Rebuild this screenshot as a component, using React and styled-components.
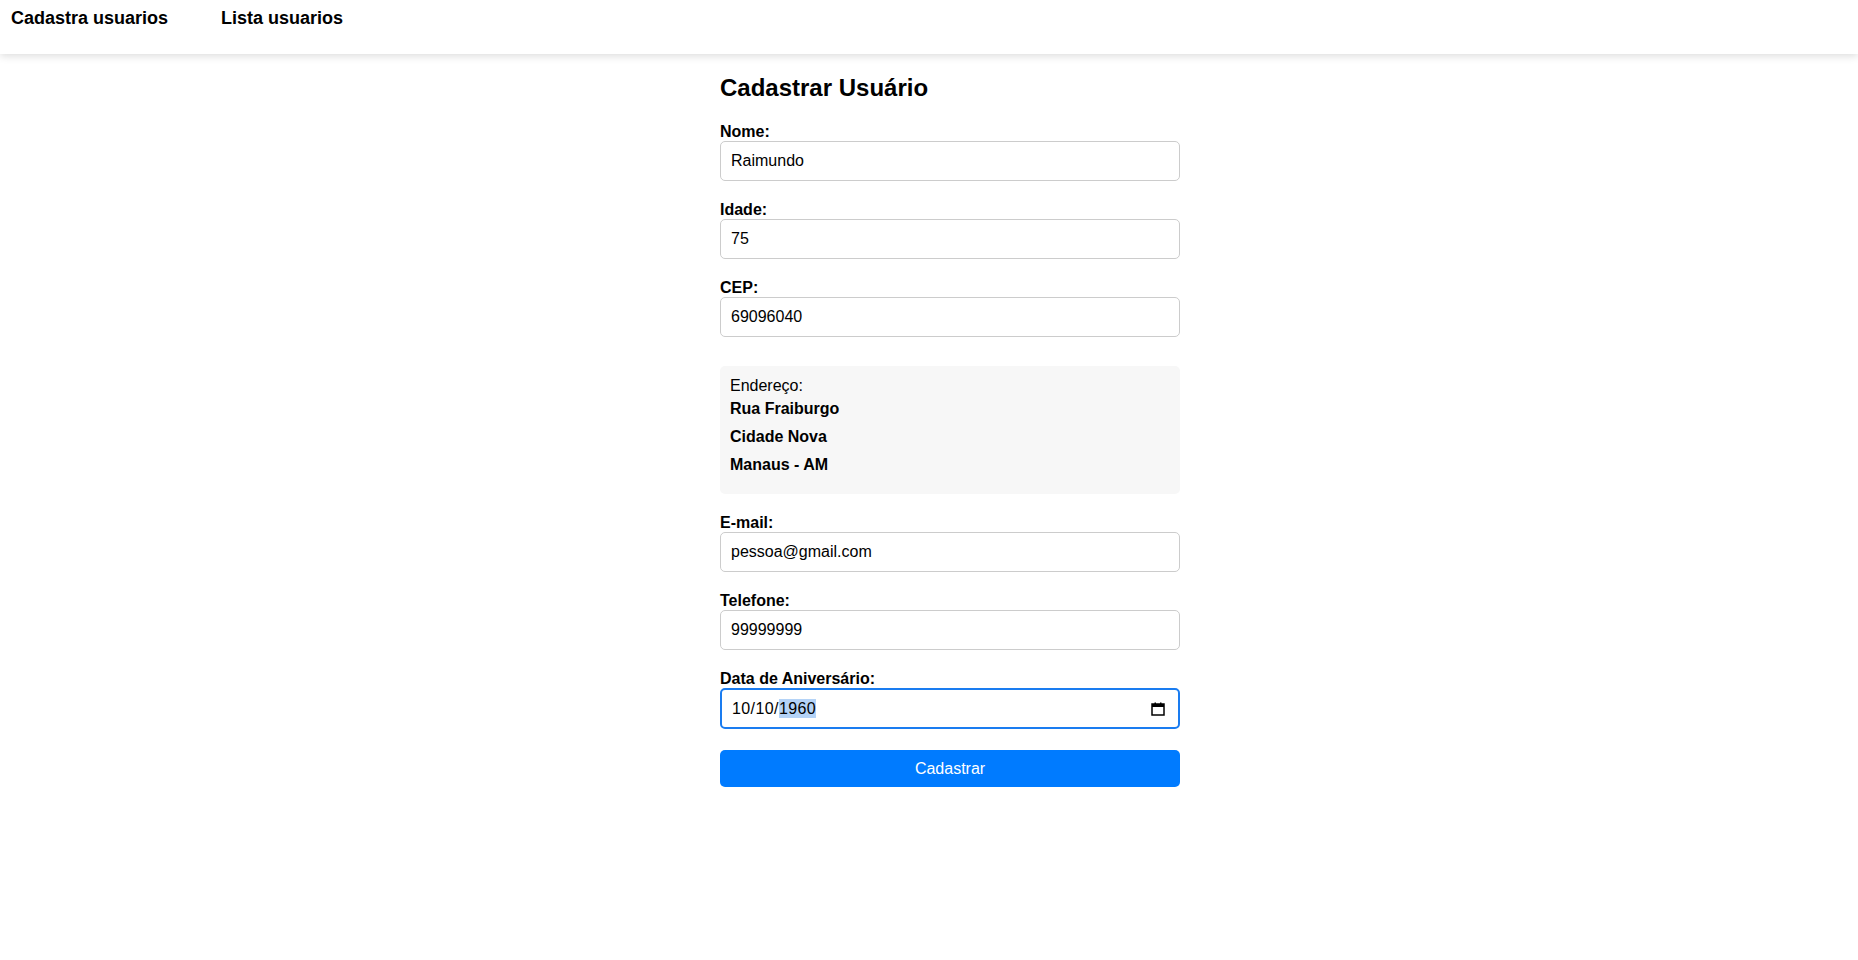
import React from "react";
import styled, { createGlobalStyle } from "styled-components";

const GlobalStyle = createGlobalStyle`
    body {
        margin: 0;
        background: #fff;
        font-family: "Liberation Sans", Arial, sans-serif;
        color: #000;
    }
`

const NavBar = styled.nav`
    height: 54px;
    box-shadow: 0 2px 8px rgba(0, 0, 0, 0.14);
    display: flex;
    align-items: flex-start;
    padding: 8px 11px 0;
    gap: 53px;
    box-sizing: border-box;
`

const NavLink = styled.a`
    font-size: 18px;
    font-weight: bold;
    color: #000;
    text-decoration: none;
    cursor: pointer;
`

const Page = styled.main`
    display: flex;
    justify-content: center;
    padding-left: 42px;
`

const Form = styled.form`
    width: 460px;
    display: flex;
    flex-direction: column;
    padding-top: 20px;
`

const Title = styled.h2`
    font-size: 24px;
    font-weight: bold;
    margin: 0 0 21px;
`

const Field = styled.div`
    display: flex;
    flex-direction: column;
    margin-bottom: 20px;
`

const Label = styled.label`
    font-size: 16px;
    font-weight: bold;
`

const Input = styled.input`
    font-family: inherit;
    font-size: 16px;
    height: 40px;
    box-sizing: border-box;
    padding: 0 10px;
    border: 1px solid #ccc;
    border-radius: 5px;
    color: #000;
    outline: none;
`

const DateBox = styled.div`
    height: 41px;
    box-sizing: border-box;
    padding: 0 13px 0 10px;
    border: 2px solid #1a7cf0;
    border-radius: 5px;
    display: flex;
    align-items: center;
    justify-content: space-between;
    font-size: 16px;
`

const DateText = styled.span`
    letter-spacing: 0.4px;
`

const Selected = styled.span`
    background: #b4d3f7;
    padding: 1px 0;
`

const AddressBox = styled.div`
    background: #f7f7f7;
    border-radius: 5px;
    padding: 11px 10px 10px;
    margin: 9px 0 20px;
    font-size: 16px;
`

const AddressCaption = styled.div`
    margin-bottom: 5px;
`

const AddressLine = styled.div`
    font-weight: bold;
    margin-bottom: 10px;
`

const SubmitButton = styled.button`
    height: 37px;
    margin-top: 1px;
    border: none;
    border-radius: 5px;
    background: #007bff;
    color: #fff;
    font-family: inherit;
    font-size: 16px;
    cursor: pointer;
`

const CalendarIcon = () => (
    <svg width="14" height="14" viewBox="0 0 14 14">
        <rect x="1" y="2" width="12" height="11" fill="none" stroke="#000" strokeWidth="1.5" />
        <rect x="1" y="2" width="12" height="3" fill="#000" />
        <rect x="3.5" y="0.5" width="1.5" height="2" fill="#000" />
        <rect x="9" y="0.5" width="1.5" height="2" fill="#000" />
    </svg>
)

const fields = [
    { label: "Nome:", value: "Raimundo" },
    { label: "Idade:", value: "75" },
    { label: "CEP:", value: "69096040" },
]

const contact = [
    { label: "E-mail:", value: "pessoa@gmail.com" },
    { label: "Telefone:", value: "99999999" },
]

const App = () => {
    return (
        <>
            <GlobalStyle />
            <NavBar>
                <NavLink>Cadastra usuarios</NavLink>
                <NavLink>Lista usuarios</NavLink>
            </NavBar>
            <Page>
                <Form onSubmit={e => e.preventDefault()}>
                    <Title>Cadastrar Usuário</Title>
                    {fields.map(f => (
                        <Field key={f.label}>
                            <Label>{f.label}</Label>
                            <Input type="text" defaultValue={f.value} />
                        </Field>
                    ))}
                    <AddressBox>
                        <AddressCaption>Endereço:</AddressCaption>
                        <AddressLine>Rua Fraiburgo</AddressLine>
                        <AddressLine>Cidade Nova</AddressLine>
                        <AddressLine>Manaus - AM</AddressLine>
                    </AddressBox>
                    {contact.map(f => (
                        <Field key={f.label}>
                            <Label>{f.label}</Label>
                            <Input type="text" defaultValue={f.value} />
                        </Field>
                    ))}
                    <Field>
                        <Label>Data de Aniversário:</Label>
                        <DateBox>
                            <DateText>10/10/<Selected>1960</Selected></DateText>
                            <CalendarIcon />
                        </DateBox>
                    </Field>
                    <SubmitButton type="submit">Cadastrar</SubmitButton>
                </Form>
            </Page>
        </>
    );
}

export default App
